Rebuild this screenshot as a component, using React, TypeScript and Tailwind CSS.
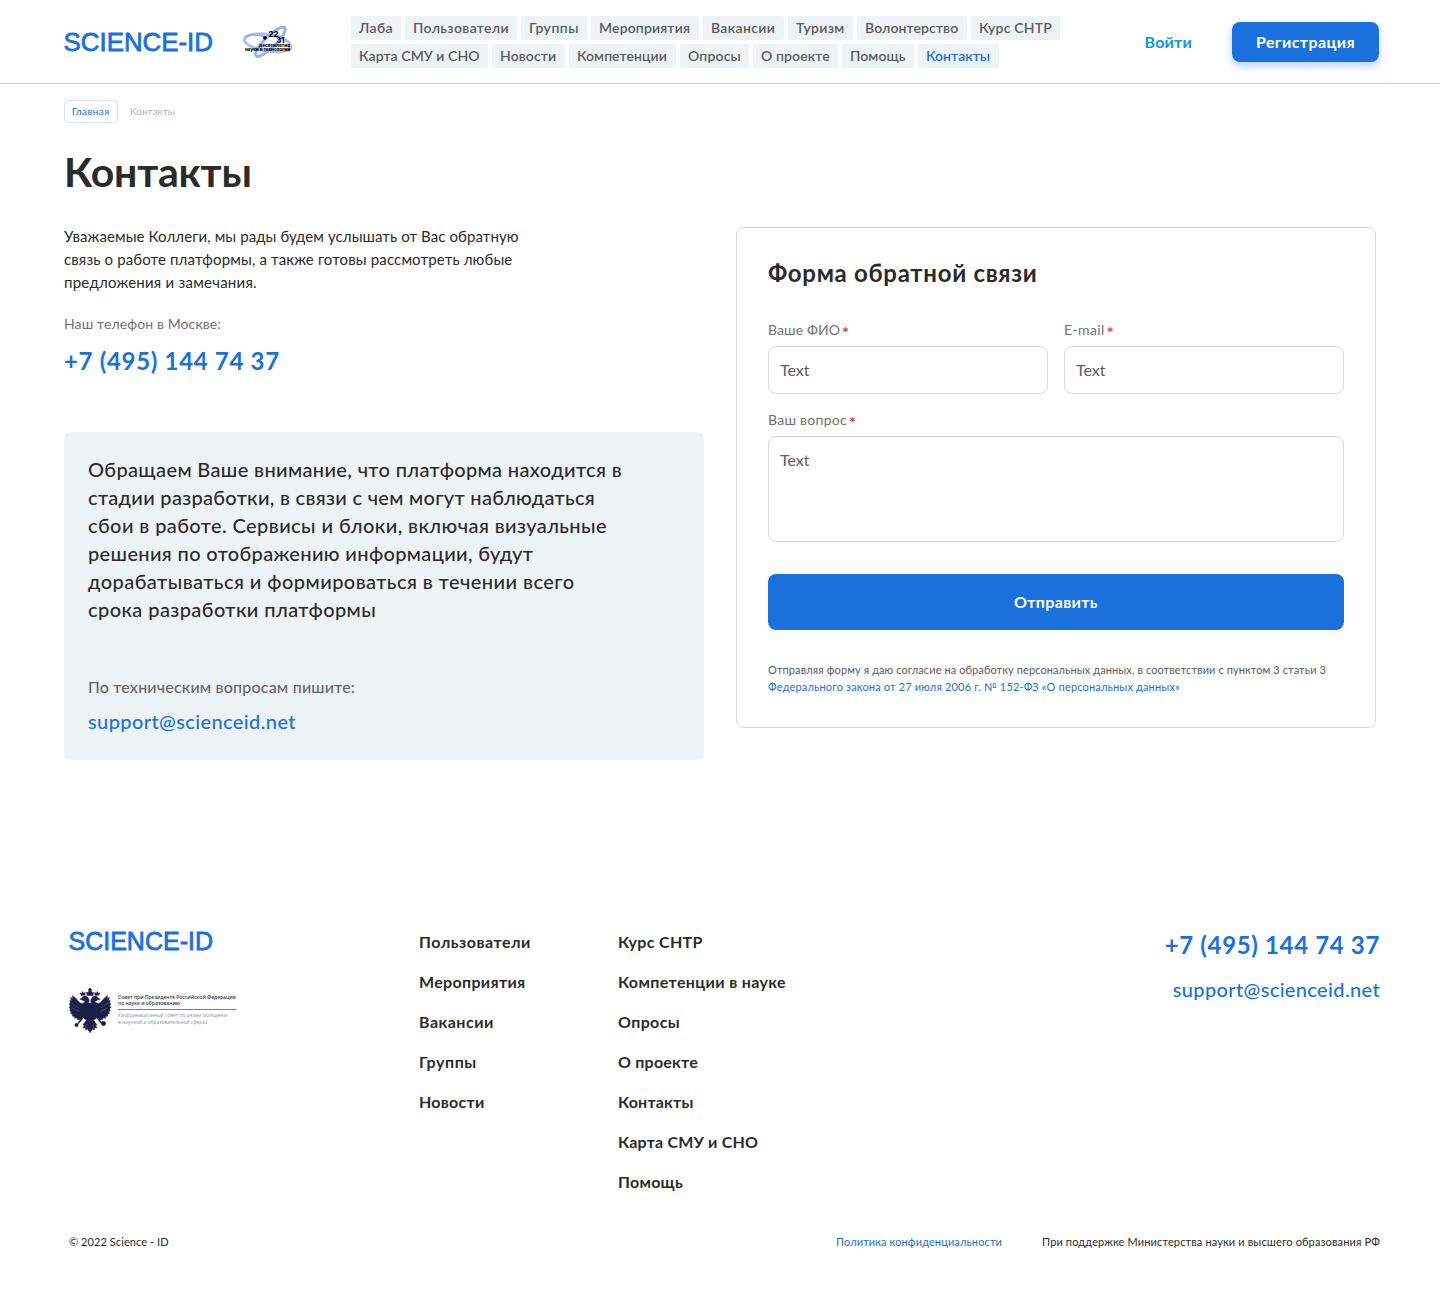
type NavItem = { label: string; cls: string };

const NAV_TOP: NavItem[] = [
  { label: "Лаба", cls: "w-[50px] tracking-[0.4px]" },
  { label: "Пользователи", cls: "w-28 tracking-[0.34px]" },
  { label: "Группы", cls: "w-[66px] tracking-[0.49px]" },
  { label: "Мероприятия", cls: "w-[108px] tracking-[0.15px]" },
  { label: "Вакансии", cls: "w-[81px] tracking-[0.34px]" },
  { label: "Туризм", cls: "w-[65px] tracking-[0.3px]" },
  { label: "Волонтерство", cls: "w-[110px] tracking-[0.1px]" },
  { label: "Курс СНТР", cls: "w-[89px] tracking-[0.2px]" },
];

const NAV_BOTTOM: NavItem[] = [
  { label: "Карта СМУ и СНО", cls: "w-[137px] tracking-[0.07px]" },
  { label: "Новости", cls: "w-[73px] tracking-[0.1px]" },
  { label: "Компетенции", cls: "w-[107px] tracking-[0.05px]" },
  { label: "Опросы", cls: "w-[69px] tracking-[0.18px]" },
  { label: "О проекте", cls: "w-[85px] tracking-[0.13px]" },
  { label: "Помощь", cls: "w-[72px] tracking-[0.1px]" },
  { label: "Контакты", cls: "w-[81px] tracking-[0.03px] text-[#1a71dd]" },
];

const FOOTER_LEFT: NavItem[] = [
  { label: "Пользователи", cls: "tracking-[0.5px]" },
  { label: "Мероприятия", cls: "tracking-[0.32px]" },
  { label: "Вакансии", cls: "tracking-[0.5px]" },
  { label: "Группы", cls: "tracking-[0.6px]" },
  { label: "Новости", cls: "tracking-[0.25px]" },
];

const FOOTER_RIGHT: NavItem[] = [
  { label: "Курс СНТР", cls: "tracking-[0.32px]" },
  { label: "Компетенции в науке", cls: "tracking-[0.36px]" },
  { label: "Опросы", cls: "tracking-[0.37px]" },
  { label: "О проекте", cls: "tracking-[0.23px]" },
  { label: "Контакты", cls: "tracking-[0.2px]" },
  { label: "Карта СМУ и СНО", cls: "tracking-[0.19px]" },
  { label: "Помощь", cls: "tracking-[0.27px]" },
];

const NOTICE = [
  { text: "Обращаем Ваше внимание, что платформа находится в", cls: "tracking-[0.357px]" },
  { text: "стадии разработки, в связи с чем могут наблюдаться", cls: "tracking-[0.306px]" },
  { text: "сбои в работе. Сервисы и блоки, включая визуальные", cls: "tracking-[0.415px]" },
  { text: "решения по отображению информации, будут", cls: "tracking-[0.35px]" },
  { text: "дорабатываться и формироваться в течении всего", cls: "tracking-[0.45px]" },
  { text: "срока разработки платформы", cls: "tracking-[0.42px]" },
];

function Wordmark({ className, width }: { className: string; width: number }) {
  return (
    <svg className={className} viewBox={`0 0 ${width + 4} 32`} aria-label="SCIENCE-ID">
      <text
        x="0.5"
        y="25"
        fontFamily="Liberation Sans, Arial, sans-serif"
        fontSize={width > 146 ? 26.5 : 25.5}
        textLength={width + 1.5}
        lengthAdjust="spacingAndGlyphs"
        fill="#1a71dd"
        stroke="#1a71dd"
        strokeWidth="0.8"
      >
        SCIENCE-ID
      </text>
    </svg>
  );
}

function DecadeEmblem() {
  return (
    <svg className="h-9 w-[52px]" viewBox="0 0 52 36">
      <g fill="none">
        <ellipse cx="25.500" cy="18.800" rx="23.200" ry="8.300" transform="rotate(9 25.500 18.800)" stroke="#a3c1fa" strokeWidth="3" />
        <ellipse cx="28.300" cy="17.700" rx="20" ry="5.600" transform="rotate(-44 28.300 17.700)" stroke="#8fb2f7" strokeWidth="2.800" />
        <path d="M2.500 14.500c2-4 10-4.500 20-2M42 27c5 .6 7-1 7.500-3.500M14 33c3 .8 6-1 10-4" stroke="#8fb2f7" strokeWidth="1.600" />
      </g>
      <circle cx="23" cy="13.800" r="1.900" fill="#000" />
      <g fontFamily="Inter, sans-serif" fontWeight="800" fill="#000">
        <text x="26.500" y="12.800" fontSize="7.500" textLength="10" lengthAdjust="spacingAndGlyphs">22</text>
        <text x="34.500" y="19" fontSize="7.500" textLength="8" lengthAdjust="spacingAndGlyphs">31</text>
        <text x="17" y="23" fontSize="4.600" textLength="31" lengthAdjust="spacingAndGlyphs">десятилетие</text>
        <text x="3" y="27.300" fontSize="4.600" textLength="45" lengthAdjust="spacingAndGlyphs">науки и технологий</text>
      </g>
    </svg>
  );
}

function EagleHalf() {
  return (
    <g>
      <path d="M21 17h-2.500l-1.500 2.500c1 1.500-.5 3-2 2.500.8 1 .5 2-1 2.500l1 8 2.500 1.500-3.500 5 1.500.3-1.500 2.700 2.500-.3.300 2.300 1.700-1L21 46.500z" />
      <path d="M20 22c-1.500-2-1-4.500.2-6.500 0-3-1.500-5.500-4.200-5.500-1.500 0-2.600.8-3 2l-2.200 1.200 2.400.7c1 .9 2.300.7 2.800 1.800-1.300 1.600-3.500 2.300-5.200 1L6.500 12 3.500 9.500l.3 3L1.500 11.500l1 3.200-1.700-.3.8 3-1.300.2 1 2.800-1.100.5 1.300 2.300-1 1 1.800 1.800-.8 1.200 2.100 1.300-.4 1.600 2.300.5.1 1.700 2.300-.5.600 1.700 2-1.300 1 1.500 2-1.800z" />
      <path d="M12 9.300l-.8-2.500 1.400.7.900-2 1.300 1.800 1.500-.7-.3 2.700z" />
      <path d="M15 30.500l-6 7M11.500 33.500l-3-1" fill="none" strokeWidth="1.500" />
    </g>
  );
}

function CouncilLogo() {
  return (
    <svg className="h-12 w-[170px]" viewBox="0 0 170 48">
      <g fill="#1d2046" stroke="#1d2046" strokeLinejoin="round" strokeWidth="0.5">
        <path d="M18.200 9.500l-.9-3.300 1.700.5.900-1.700-.6-1.200L21 1.800l1.700 2-.6 1.200.9 1.700 1.700-.5-.9 3.300z" />
        <EagleHalf />
        <g transform="translate(42 0) scale(-1 1)">
          <EagleHalf />
        </g>
        <circle cx="7.500" cy="39" r="1.700" />
        <circle cx="34.500" cy="37.500" r="2.200" />
      </g>
      <path
        d="M3 17l7 5M3.500 22l7 3.500M39 17l-7 5M38.500 22l-7 3.500M18 38l-1 4M24 38l1 4"
        stroke="#fff"
        fill="none"
        strokeWidth="0.35"
        opacity="0.4"
      />
      <g fontFamily="Open Sans, sans-serif" fontSize="5.400">
        <g fontWeight="600" fill="#34375a">
          <text x="49" y="13" textLength="118" lengthAdjust="spacingAndGlyphs">
            Совет при Президенте Российской Федерации
          </text>
          <text x="49" y="19.200" textLength="62" lengthAdjust="spacingAndGlyphs">
            по науке и образованию
          </text>
        </g>
        <g fill="#9092a8">
          <text x="49" y="31.200" textLength="109" lengthAdjust="spacingAndGlyphs">
            Координационный совет по делам молодежи
          </text>
          <text x="49" y="37.500" textLength="89.500" lengthAdjust="spacingAndGlyphs">
            в научной и образовательной сферах
          </text>
        </g>
      </g>
      <path d="M49 23.500h118.500" stroke="#777991" strokeWidth="1" />
    </svg>
  );
}

function NavRow({ items }: { items: NavItem[] }) {
  return (
    <div className="flex gap-1">
      {items.map((item) => (
        <a
          key={item.label}
          className={`flex h-6 items-center rounded-xs bg-[#eef3f6] pl-2 whitespace-nowrap ${item.cls}`}
        >
          {item.label}
        </a>
      ))}
    </div>
  );
}

function Label({ text, cls }: { text: string; cls: string }) {
  return (
    <span className="flex h-5 items-center gap-0.5 text-sm leading-5 text-[#727272]">
      <span className={cls}>{text}</span>
      <span className="pt-1 text-base leading-4 font-bold text-[#f02d2d]">*</span>
    </span>
  );
}

function Field({ label, cls }: { label: string; cls: string }) {
  return (
    <label className="block w-70">
      <Label text={label} cls={cls} />
      <input
        placeholder="Text"
        className="mt-1.5 block h-12 w-full rounded-lg border border-[#d9d9d9] px-[11px] pb-0.5 text-base placeholder:text-[#5c5c5c]"
      />
    </label>
  );
}

function Header() {
  return (
    <header className="flex h-21 items-center border-b border-[#d6d6d6] pl-[63px]">
      <Wordmark className="h-8 w-[152px]" width={148} />
      <div className="ml-[27px]">
        <DecadeEmblem />
      </div>
      <nav className="ml-[57px] flex flex-1 flex-col gap-1 text-sm font-semibold text-[#5c5c5c]">
        <NavRow items={NAV_TOP} />
        <NavRow items={NAV_BOTTOM} />
      </nav>
      <a className="mr-10 text-base font-bold tracking-[0.2px] text-[#0d99e8]">Войти</a>
      <button className="mr-[61px] h-10 w-[147px] rounded-lg bg-[#1a71dd] text-base font-bold tracking-[0.4px] text-white shadow-[0_4px_8px_rgba(26,113,255,0.32)]">
        Регистрация
      </button>
    </header>
  );
}

function ContactForm() {
  return (
    <section className="mt-[5px] h-[501px] w-[640px] rounded-lg border border-[#d9d9d9] px-[31px] pt-[29px]">
      <h2 className="h-8 text-2xl font-bold tracking-[0.7px]">Форма обратной связи</h2>
      <div className="mt-[31px] flex gap-4">
        <Field label="Ваше ФИО" cls="tracking-[0.1px]" />
        <Field label="E-mail" cls="tracking-[0.4px]" />
      </div>
      <label className="mt-4 block">
        <Label text="Ваш вопрос" cls="tracking-[0.28px]" />
        <textarea
          placeholder="Text"
          className="mt-1.5 block h-[106px] w-full resize-none rounded-lg border border-[#d9d9d9] px-[11px] py-[11px] text-base placeholder:text-[#5c5c5c]"
        />
      </label>
      <button className="mt-8 h-14 w-full rounded-lg bg-[#1a71dd] text-base font-bold tracking-[0.35px] text-white">
        Отправить
      </button>
      <p className="mt-[31px] text-[11px] leading-[17px] whitespace-nowrap text-[#5c5c5c]">
        <span className="block tracking-[0.097px]">
          Отправляя форму я даю согласие на обработку персональных данных, в соответствии с пунктом 3 статьи 3
        </span>
        <a className="block tracking-[0.164px] text-[#1a71dd]">
          Федерального закона от 27 июля 2006 г. № 152-ФЗ «О персональных данных»
        </a>
      </p>
    </section>
  );
}

function Footer() {
  return (
    <footer className="mt-[165px] pr-[60px] pl-[69px]">
      <div className="flex h-[280px] items-start">
        <div className="w-[350px]">
          <Wordmark className="-ml-px h-8 w-[147px]" width={143} />
          <div className="mt-[29px]">
            <CouncilLogo />
          </div>
        </div>
        <div className="flex w-[199px] flex-col gap-4 pt-[5px] text-base font-bold">
          {FOOTER_LEFT.map((l) => (
            <a key={l.label} className={l.cls}>{l.label}</a>
          ))}
        </div>
        <div className="flex flex-col gap-4 pt-[5px] text-base font-bold">
          {FOOTER_RIGHT.map((l) => (
            <a key={l.label} className={l.cls}>{l.label}</a>
          ))}
        </div>
        <div className="ml-auto flex flex-col items-end gap-3.5 pt-1 text-[#1a71dd]">
          <span className="text-2xl font-bold tracking-[0.65px]">+7 (495) 144 74 37</span>
          <span className="text-xl leading-7 font-medium tracking-[0.36px]">support@scienceid.net</span>
        </div>
      </div>
      <div className="mt-[29px] flex items-center text-[11px] leading-4">
        <span className="tracking-[0.08px]">© 2022 Science - ID</span>
        <a className="mr-10 ml-auto tracking-[0.11px] text-[#1a71dd]">Политика конфиденциальности</a>
        <span className="tracking-[0.139px]">При поддержке Министерства науки и высшего образования РФ</span>
      </div>
    </footer>
  );
}

export default function App() {
  return (
    <div className="h-[1315px] w-[1440px] bg-white font-['Lato','Noto_Sans',sans-serif] text-[#2b2b2b]">
      <Header />
      <main className="px-16 pt-4">
        <div className="flex h-[23px] items-center text-[10px]">
          <a className="flex h-[23px] w-[54px] items-center rounded border border-[#d3e4fb] pl-[7px] tracking-[0.4px] text-[#1a71dd]">
            Главная
          </a>
          <span className="ml-3 text-[#b5b5b5]">Контакты</span>
        </div>
        <h1 className="mt-[23px] h-[53px] text-[41px] leading-[52px] font-bold tracking-[-0.2px]">Контакты</h1>
        <div className="mt-[23px] flex items-start gap-8">
          <div className="w-[640px]">
            <p className="pt-[3px] text-[15px] leading-[23px]">
              <span className="block tracking-[0.09px]">Уважаемые Коллеги, мы рады будем услышать от Вас обратную</span>
              <span className="block tracking-[0.14px]">связь о работе платформы, а также готовы рассмотреть любые</span>
              <span className="block tracking-[0.24px]">предложения и замечания.</span>
            </p>
            <p className="mt-5 text-sm leading-5 tracking-[0.11px] text-[#727272]">Наш телефон в Москве:</p>
            <p className="mt-[11px] text-2xl font-bold tracking-[0.68px] text-[#1a71dd]">+7 (495) 144 74 37</p>
            <section className="mt-[55px] h-[328px] rounded-lg bg-[#eef3f6] px-6 pt-[23px]">
              <p className="text-xl leading-7 font-medium">
                {NOTICE.map((n) => (
                  <span key={n.text} className={`block ${n.cls}`}>{n.text}</span>
                ))}
              </p>
              <p className="mt-[52px] text-base font-medium tracking-[0.2px] text-[#666]">
                По техническим вопросам пишите:
              </p>
              <p className="mt-2 text-xl leading-7 font-medium tracking-[0.39px] text-[#1a71dd]">
                support@scienceid.net
              </p>
            </section>
          </div>
          <ContactForm />
        </div>
      </main>
      <Footer />
    </div>
  );
}
